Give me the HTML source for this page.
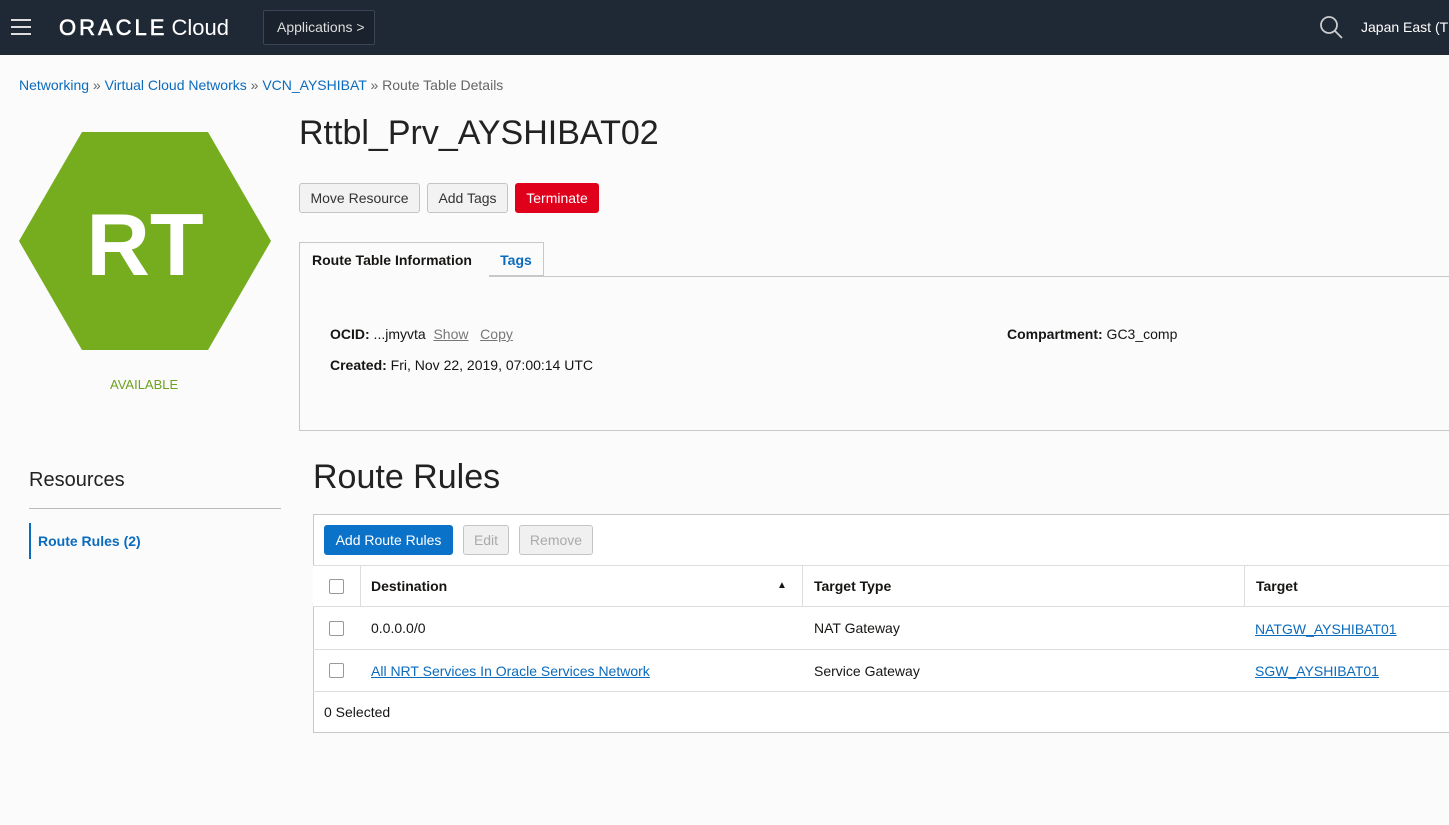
<!DOCTYPE html>
<html><head><style>
*{box-sizing:border-box}
body{margin:0;width:1449px;height:825px;overflow:hidden;background:#fbfbfb;font-family:"Liberation Sans",sans-serif;font-size:14px;color:#161513;position:relative}
.a{position:absolute}
.top{left:0;top:0;width:1449px;height:55px;background:#1f2835}
.btn{position:absolute;height:30px;border:1px solid #c4c4c4;border-radius:3px;background:#f2f2f2;font-size:14px;line-height:28px;text-align:center;color:#333}
a,.lk{color:#0b6bbd;text-decoration:none}
.u{text-decoration:underline;color:#0b6bbd}
.row{position:absolute;left:313px;width:1140px;border-top:1px solid #ddd}
.cb{position:absolute;width:15px;height:15px;border:1px solid #999;border-radius:2px;background:#fff}
</style></head><body>
<div class="a top"></div>
<div class="a" style="left:11px;top:19px;width:20px;height:2px;background:#ddd;box-shadow:0 7px 0 #ddd,0 14px 0 #ddd"></div>
<div class="a" style="left:59px;top:15px;color:#fff;font-size:22px;white-space:nowrap"><span style="letter-spacing:3px;-webkit-text-stroke:0.6px #fff">ORACLE</span><span style="margin-left:4px">Cloud</span></div>
<div class="a" style="left:263px;top:10px;width:112px;height:35px;border:1px solid #3c4553;border-radius:2px;background:#1a222d;color:#ddd;font-size:14px;line-height:33px;padding-left:13px">Applications &gt;</div>
<svg class="a" style="left:1319px;top:15px" width="24" height="24"><circle cx="10" cy="10" r="8" fill="none" stroke="#ccc" stroke-width="1.8"/><line x1="16" y1="16" x2="23" y2="23" stroke="#ccc" stroke-width="1.8"/></svg>
<div class="a" style="left:1361px;top:19px;color:#fff;font-size:14px">Japan East (T</div>
<div class="a" style="left:19px;top:77px;font-size:14px;color:#666"><a>Networking</a> » <a>Virtual Cloud Networks</a> » <a>VCN_AYSHIBAT</a> » Route Table Details</div>
<svg class="a" style="left:19px;top:132px" width="252" height="218"><polygon points="63,0 189,0 252,109 189,218 63,218 0,109" fill="#75ad1f"/><text x="126" y="143" font-family="Liberation Sans" font-weight="bold" font-size="88" fill="#fff" text-anchor="middle">RT</text></svg>
<div class="a" style="left:110px;top:377px;color:#6ca31c;font-size:13px">AVAILABLE</div>
<div class="a" style="left:299px;top:114px;font-size:34px;color:#222">Rttbl_Prv_AYSHIBAT02</div>
<div class="btn" style="left:299px;top:183px;width:121px">Move Resource</div>
<div class="btn" style="left:427px;top:183px;width:81px">Add Tags</div>
<div class="btn" style="left:515px;top:183px;width:84px;background:#e0001b;border-color:#e0001b;color:#fff">Terminate</div>
<div class="a" style="left:299px;top:276px;width:1160px;height:155px;border:1px solid #c8c8c8;background:#fbfbfb"></div>
<div class="a" style="left:299px;top:242px;width:191px;height:35px;border:1px solid #c8c8c8;border-bottom:none;background:#fbfbfb;font-weight:bold;line-height:34px;padding-left:12px">Route Table Information</div>
<div class="a" style="left:489px;top:242px;width:55px;height:34px;border:1px solid #c8c8c8;border-left:none;background:#fbfbfb;font-weight:bold;line-height:34px;text-align:center;color:#0b6bbd">Tags</div>
<div class="a" style="left:330px;top:326px"><b>OCID:</b> ...jmyvta &nbsp;<span style="color:#777;text-decoration:underline">Show</span> &nbsp;&nbsp;<span style="color:#777;text-decoration:underline">Copy</span></div>
<div class="a" style="left:330px;top:357px"><b>Created:</b> Fri, Nov 22, 2019, 07:00:14 UTC</div>
<div class="a" style="left:1007px;top:326px"><b>Compartment:</b> GC3_comp</div>
<div class="a" style="left:29px;top:469px;font-size:20px;color:#222">Resources</div>
<div class="a" style="left:29px;top:508px;width:252px;height:1px;background:#bbb"></div>
<div class="a" style="left:29px;top:523px;width:2px;height:36px;background:#0b6bbd"></div>
<div class="a" style="left:38px;top:533px;font-weight:bold;color:#0b6bbd">Route Rules (2)</div>
<div class="a" style="left:313px;top:458px;font-size:34px;color:#222">Route Rules</div>
<div class="a" style="left:313px;top:514px;width:1140px;height:219px;border:1px solid #c8c8c8;background:#fff"></div>
<div class="btn" style="left:324px;top:525px;width:129px;background:#0b72c9;border-color:#0b72c9;color:#fff">Add Route Rules</div>
<div class="btn" style="left:463px;top:525px;width:46px;color:#aaa;background:#f0f0f0">Edit</div>
<div class="btn" style="left:519px;top:525px;width:74px;color:#aaa;background:#f0f0f0">Remove</div>
<div class="row" style="top:565px;height:42px;background:#fff"></div>
<div class="row" style="top:606px"></div><div class="row" style="top:649px"></div><div class="row" style="top:691px"></div>
<div class="a" style="left:360px;top:566px;width:1px;height:40px;background:#ddd"></div>
<div class="a" style="left:802px;top:566px;width:1px;height:40px;background:#ddd"></div>
<div class="a" style="left:1244px;top:566px;width:1px;height:40px;background:#ddd"></div>
<div class="cb" style="left:329px;top:579px"></div><div class="cb" style="left:329px;top:621px"></div><div class="cb" style="left:329px;top:663px"></div>
<div class="a" style="left:371px;top:578px;font-weight:bold">Destination</div>
<div class="a" style="left:777px;top:580px;font-size:10px">▲</div>
<div class="a" style="left:814px;top:578px;font-weight:bold">Target Type</div>
<div class="a" style="left:1256px;top:578px;font-weight:bold">Target</div>
<div class="a" style="left:371px;top:620px">0.0.0.0/0</div>
<div class="a" style="left:814px;top:620px">NAT Gateway</div>
<div class="a u" style="left:1255px;top:621px">NATGW_AYSHIBAT01</div>
<div class="a u" style="left:371px;top:663px">All NRT Services In Oracle Services Network</div>
<div class="a" style="left:814px;top:663px">Service Gateway</div>
<div class="a u" style="left:1255px;top:663px">SGW_AYSHIBAT01</div>
<div class="a" style="left:324px;top:704px">0 Selected</div>
</body></html>
